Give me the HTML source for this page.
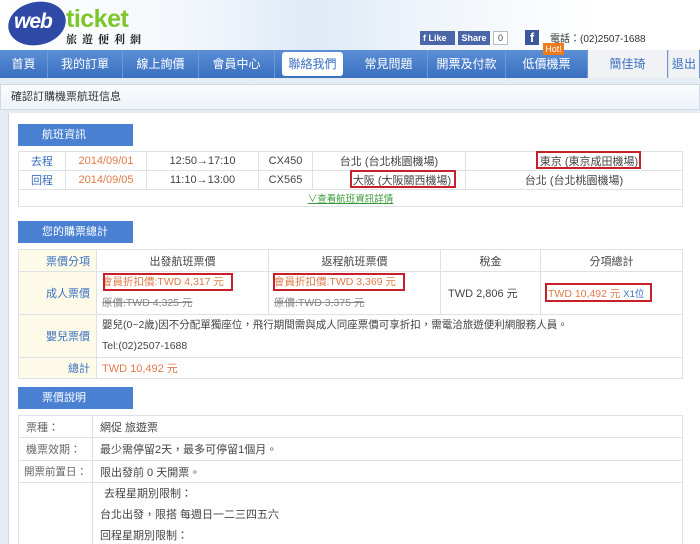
<!DOCTYPE html>
<html><head><meta charset="utf-8"><style>
*{margin:0;padding:0;box-sizing:border-box}
html,body{width:700px;height:544px;overflow:hidden}
body{background:#e6ecf3;font-family:"Liberation Sans","Noto Sans CJK TC",sans-serif;font-size:11px;color:#444;position:relative}
.a{position:absolute}
.hdr{left:0;top:0;width:700px;height:50px;background:linear-gradient(90deg,#fff 0%,#f4f8fc 25%,#dfeaf6 45%,#eef4fa 60%,#fff 85%)}
.nav{left:0;top:50px;width:700px;height:28px;background:linear-gradient(#5b8fd6,#3a6fc0);}
.nav div{position:absolute;top:0;height:28px;line-height:28px;text-align:center;color:#fff;font-size:12px;border-right:1px solid #6d98d6}
.tab{left:18px;width:115px;height:22px;background:#4a80d2;color:#fff;font-size:11px;line-height:22px;padding-left:24px}
table{position:absolute;border-collapse:collapse;background:#fff;table-layout:fixed}
td{border:1px solid #dde2e8;font-size:11px;white-space:nowrap;overflow:hidden}
.rb{position:absolute;border:2px solid #c8202a}
.or{color:#e07a4a}
</style></head><body>
<div class="a hdr"></div>
<div class="a" style="left:8px;top:2px;width:58px;height:43px;border-radius:50%;background:#2e4aa6;transform:rotate(-12deg)"></div>
<div class="a" style="left:14px;top:10px;color:#fff;font-weight:bold;font-style:italic;font-size:21px;letter-spacing:-1px">web</div>
<div class="a" style="left:66px;top:5px;color:#7cc62a;font-weight:bold;font-size:25px;letter-spacing:-0.5px">ticket</div>
<div class="a" style="left:66px;top:31px;color:#222;font-size:11px;letter-spacing:5px;font-family:'Noto Serif CJK SC',serif;font-weight:bold">旅遊便利網</div>
<div class="a" style="left:420px;top:31px;width:35px;height:14px;background:#4a66a8;color:#fff;font-size:9px;font-weight:bold;line-height:14px;padding-left:3px">f Like</div>
<div class="a" style="left:458px;top:31px;width:32px;height:14px;background:#4a66a8;color:#fff;font-size:9px;font-weight:bold;line-height:14px;text-align:center">Share</div>
<div class="a" style="left:493px;top:31px;width:15px;height:14px;border:1px solid #bbb;background:#fff;font-size:9px;line-height:12px;text-align:center">0</div>
<div class="a" style="left:525px;top:30px;width:14px;height:15px;background:#3b5998;color:#fff;font-weight:bold;font-size:13px;line-height:16px;text-align:center">f</div>
<div class="a" style="left:550px;top:30px;font-size:10px;color:#333">電話：(02)2507-1688</div>
<div class="a nav">
<div style="left:0;width:48px">首頁</div>
<div style="left:48px;width:75px">我的訂單</div>
<div style="left:123px;width:76px">線上詢價</div>
<div style="left:199px;width:76px">會員中心</div>
<div style="left:275px;width:75px;border:none"><span style="display:block;margin:2px 7px;height:24px;line-height:24px;background:#fff;color:#3a6fc0;border-radius:3px">聯絡我們</span></div>
<div style="left:350px;width:78px">常見問題</div>
<div style="left:428px;width:78px">開票及付款</div>
<div style="left:506px;width:82px">低價機票</div>
<div style="left:588px;width:80px;background:#f0f2f5;color:#3a6fc0">簡佳琦</div>
<div style="left:668px;width:32px;background:#f0f2f5;color:#3a6fc0;border-left:1px solid #ddd">退出</div>
</div>
<div class="a" style="left:543px;top:43px;width:21px;height:12px;background:#f07a1e;color:#fff;font-size:9px;line-height:12px;text-align:center">Hot!</div>
<div class="a" style="left:0;top:84px;width:700px;height:26px;background:linear-gradient(#fbfcfe,#eef3f9);border:1px solid #d0d9e4;padding-left:10px;line-height:25px;color:#333;font-size:11px">確認訂購機票航班信息</div>
<div class="a" style="left:8px;top:113px;width:692px;height:431px;background:#fff;border-left:1px solid #d0d9e4"></div>

<div class="a tab" style="top:124px">航班資訊</div>
<table style="left:18px;top:151px;width:665px">
<colgroup><col style="width:47px"><col style="width:81px"><col style="width:112px"><col style="width:54px"><col style="width:153px"><col></colgroup>
<tr style="height:19px"><td style="text-align:center;color:#3a6fc0">去程</td><td style="text-align:center" class="or">2014/09/01</td><td style="text-align:center">12:50→17:10</td><td style="text-align:center">CX450</td><td style="text-align:center">台北 (台北桃園機場)</td><td style="text-align:center;padding-left:30px">東京 (東京成田機場)</td></tr>
<tr style="height:19px"><td style="text-align:center;color:#3a6fc0">回程</td><td style="text-align:center" class="or">2014/09/05</td><td style="text-align:center">11:10→13:00</td><td style="text-align:center">CX565</td><td style="text-align:center;padding-left:26px">大阪 (大阪關西機場)</td><td style="text-align:center">台北 (台北桃園機場)</td></tr>
<tr style="height:17px"><td colspan="6" style="text-align:center;font-size:9.5px;color:#3a9a3a;text-decoration:underline">∨查看航班資訊詳情</td></tr>
</table>
<div class="rb" style="left:536px;top:151px;width:105px;height:18px"></div>
<div class="rb" style="left:350px;top:170px;width:106px;height:18px"></div>

<div class="a tab" style="top:221px">您的購票總計</div>
<table style="left:18px;top:249px;width:665px">
<colgroup><col style="width:78px"><col style="width:172px"><col style="width:172px"><col style="width:100px"><col></colgroup>
<tr style="height:22px"><td style="background:#fdfbe8;text-align:right;padding-right:6px;color:#3a6fc0">票價分項</td><td style="text-align:center">出發航班票價</td><td style="text-align:center">返程航班票價</td><td style="text-align:center">稅金</td><td style="text-align:center">分項總計</td></tr>
<tr style="height:43px"><td style="background:#fdfbe8;text-align:right;padding-right:6px;color:#3a6fc0">成人票價</td>
<td style="padding-left:5px;line-height:21px;font-size:10.5px"><span class="or">會員折扣價:TWD 4,317 元</span><br><s style="color:#888">原價:TWD 4,325 元</s></td>
<td style="padding-left:5px;line-height:21px;font-size:10.5px"><span class="or">會員折扣價:TWD 3,369 元</span><br><s style="color:#888">原價:TWD 3,375 元</s></td>
<td style="padding-left:7px">TWD 2,806 元</td><td style="padding-left:7px;font-size:10.5px"><span class="or">TWD 10,492 元</span> <span style="font-size:9.5px;color:#3a6fc0">X1位</span></td></tr>
<tr style="height:43px"><td style="background:#fdfbe8;text-align:right;padding-right:6px;color:#3a6fc0">嬰兒票價</td><td colspan="4" style="padding-left:5px;line-height:21px;font-size:10.5px">嬰兒(0~2歲)因不分配單獨座位，飛行期間需與成人同座票價可享折扣，需電洽旅遊便利網服務人員。<br>Tel:(02)2507-1688</td></tr>
<tr style="height:21px"><td style="background:#fdfbe8;text-align:right;padding-right:6px;color:#3a6fc0">總計</td><td colspan="4" style="padding-left:5px" class="or">TWD 10,492 元</td></tr>
</table>
<div class="rb" style="left:103px;top:273px;width:130px;height:18px"></div>
<div class="rb" style="left:273px;top:273px;width:132px;height:18px"></div>
<div class="rb" style="left:545px;top:283px;width:107px;height:19px"></div>

<div class="a tab" style="top:387px">票價說明</div>
<table style="left:18px;top:415px;width:665px">
<colgroup><col style="width:74px"><col></colgroup>
<tr style="height:22px"><td style="padding-left:7px;color:#666">票種：</td><td style="padding-left:7px">網促 旅遊票</td></tr>
<tr style="height:23px"><td style="padding-left:7px;color:#666">機票效期：</td><td style="padding-left:7px">最少需停留2天，最多可停留1個月。</td></tr>
<tr style="height:22px"><td style="padding-left:5px;color:#666;font-size:10.5px">開票前置日：</td><td style="padding-left:7px">限出發前 0 天開票。</td></tr>
<tr style="height:70px"><td></td><td style="padding-left:7px;line-height:21px;vertical-align:top;padding-top:1px"><span style="padding-left:4px">去程星期別限制：</span><br>台北出發，限搭 每週日一二三四五六<br>回程星期別限制：</td></tr>
</table>
</body></html>
